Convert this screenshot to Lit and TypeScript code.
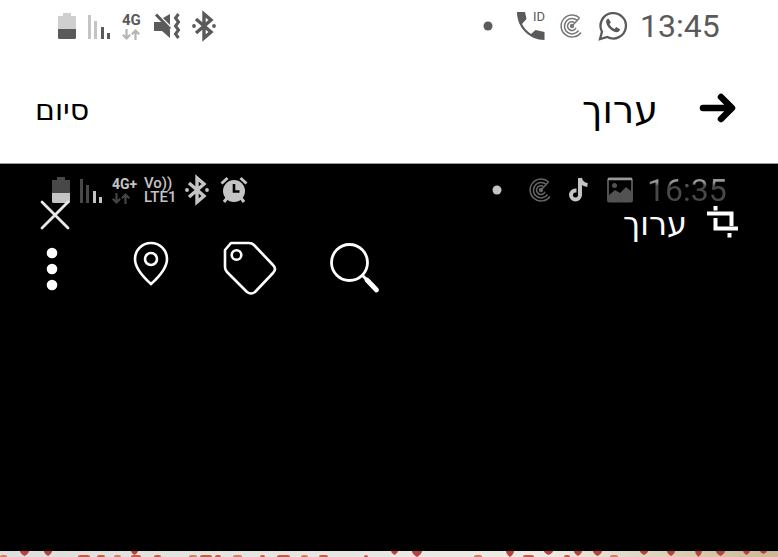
import { LitElement, html, css, svg } from "lit";
import { customElement } from "lit/decorators.js";

const battery = (top: string, body: string) => html`
  <svg width="18" height="26" viewBox="0 0 18 26" aria-hidden="true">
    <path d="M5 0h8v3h5v13H0V3h5z" fill=${top} />
    <path d="M0 16h18v8.500a1.500 1.500 0 0 1-1.500 1.500h-15A1.500 1.500 0 0 1 0 24.500z" fill=${body} />
  </svg>`;

const signal = (weak: string, strong: string) => html`
  <svg width="22" height="26" viewBox="0 0 22 26" aria-hidden="true">
    <path d="M0 2h3v24H0zM6 8h3v18H6z" fill=${weak} />
    <path d="M13 14h3v12h-3zM19 20h3v6h-3z" fill=${strong} />
  </svg>`;

const arrows = html`
  <svg class="arrows" width="18" height="11" viewBox="0 0 18 11" aria-hidden="true">
    <path d="M4.500 0v9M.8 5.800l3.700 3.700 3.700-3.700M13.500 11V2M9.800 5.200l3.700-3.700 3.700 3.700"
      fill="none" stroke="currentColor" stroke-width="2.200" />
  </svg>`;

const bluetooth = html`
  <svg width="24" height="28" viewBox="0 0 24 28" aria-hidden="true">
    <path d="M4 7l15 13-7 6V2l7 6L4 21" fill="none" stroke="currentColor" stroke-width="3.400" />
    <circle cx="2" cy="14" r="1.900" fill="currentColor" />
    <circle cx="22" cy="14" r="1.900" fill="currentColor" />
  </svg>`;

const radar = html`
  <svg class="radar" width="28" height="26" viewBox="0 0 28 26" aria-hidden="true">
    <g fill="none" stroke="currentColor" stroke-width="1.500">
      <path d="M21.500 4.800A11 11 0 1 0 23 19.500" />
      <path d="M19 7.200A7.700 7.700 0 1 0 20.500 17.500" />
      <path d="M16.500 9.500A4.400 4.400 0 1 0 18 14.800" />
      <path d="M14 13l7.500-8" />
    </g>
    <circle cx="14" cy="13" r="2.200" fill="currentColor" />
  </svg>`;

const dot = html`
  <svg width="22" height="10" viewBox="0 0 22 10" aria-hidden="true">
    <circle cx="6" cy="5" r="4.500" fill="currentColor" />
  </svg>`;

const mute = html`
  <svg width="26" height="26" viewBox="0 0 26 26" aria-hidden="true">
    <path d="M0 9h8l8 8v8l-8-7H0zM9 5l7-4v11z" fill="currentColor" />
    <path d="M2 1.500l14 14.500" stroke="currentColor" stroke-width="3" />
    <path d="M24.500 1l-3 4 3 4-3 4 3 4-3 4 3 4" fill="none" stroke="currentColor" stroke-width="3" />
  </svg>`;

const caller = html`
  <svg width="30" height="30" viewBox="0 0 30 30" aria-hidden="true">
    <path d="M1 1h8l1.500 7-4.500 5c2 4 5 7 9 10l4.500-4 9 2v8C14 29 1 17 1 1z" fill="currentColor" />
    <text x="17" y="10" class="id" fill="currentColor">ID</text>
  </svg>`;

const whatsapp = html`
  <svg width="30" height="30" viewBox="0 0 30 30" aria-hidden="true">
    <path d="M2 28l2-7.300A12.700 12.700 0 1 1 9.300 26z" fill="none" stroke="currentColor" stroke-width="2.300" />
    <path fill="currentColor"
      d="M10.500 7.500c-1.800.4-2.700 2-2.300 4 1 4.700 5.500 9 9.800 9.700 2 .2 3.800-.9 4-3l-3.800-2.200-1.700 2c-2.200-.8-4.200-2.800-5-4.900l1.400-1.700z" />
  </svg>`;

const alarm = html`
  <svg width="28" height="28" viewBox="0 0 28 28" aria-hidden="true">
    <circle cx="15" cy="15" r="11" fill="currentColor" />
    <path d="M2.500 7.500l6-5.500M27.500 7.500l-6-5.500M8 22l-3 4M22 22l3 4" stroke="currentColor" stroke-width="3" />
    <path d="M15 8v7.500h5.500" fill="none" stroke="#000" stroke-width="2.600" />
  </svg>`;

const note = html`
  <svg width="24" height="26" viewBox="0 0 24 26" aria-hidden="true">
    <path d="M11 1v17a4.500 4.500 0 1 1-4.500-4.500h1M11 1c.5 4 3.500 6.500 7.500 7" fill="none"
      stroke="currentColor" stroke-width="4" />
  </svg>`;

const picture = html`
  <svg width="26" height="26" viewBox="0 0 26 26" aria-hidden="true">
    <rect x="1" y="1.500" width="24" height="23" rx="1.500" fill="none" stroke="#525252" stroke-width="2" />
    <path d="M1 2h24" stroke="#999" stroke-width="2.500" />
    <path d="M2 18l6-5 5 3 6-6 6 5v9H2z" fill="#525252" />
    <circle cx="7.500" cy="8.500" r="2.500" fill="#525252" />
  </svg>`;

const hearts = [
  [20, 29, 5], [44, 52, 5], [131, 138, 4], [391, 398, 4], [412, 422, 6], [506, 514, 6],
  [544, 553, 4], [574, 582, 5], [593, 602, 5], [640, 648, 4], [667, 675, 5], [695, 702, 6], [716, 725, 5],
  [743, 750, 4], [760, 767, 3],
];
const blots = [
  [0, 7], [78, 90], [97, 105], [114, 121], [131, 141], [154, 161], [189, 197], [200, 212],
  [215, 221], [233, 242], [260, 265], [277, 290], [301, 308], [319, 328], [364, 368],
  [474, 482], [523, 534], [564, 570], [610, 618],
];

@customElement("app-root")
export class AppRoot extends LitElement {
  static styles = css`
    :host {
      display: flex;
      flex-direction: column;
      min-height: 100vh;
      background: #fff;
      font-family: Roboto, "Open Sans", sans-serif;
    }
    svg { display: block; flex: none; overflow: visible; }
    button {
      appearance: none;
      border: 0;
      padding: 0;
      margin: 0;
      background: none;
      color: inherit;
      font: inherit;
      cursor: pointer;
    }
    .status, .group, .bar, .tools, .title { display: flex; align-items: center; }
    .status, .bar { justify-content: space-between; }
    .status { height: 52px; padding: 0 58px 0 58px; color: #5a5a5a; }
    .group { gap: 12px; }
    .clock { font-size: 32px; line-height: 32px; width: 80px; white-space: nowrap; }
    .net { width: 20px; font-size: 15px; line-height: 14px; font-weight: 700; white-space: nowrap; }
    .arrows { margin-top: 2px; color: #b5b5b5; }
    .id { font: 13px Roboto, sans-serif; }
    .radar { color: #777; }
    .editor .radar { color: #666; }
    .bar { font-family: "DejaVu Sans", "Open Sans", sans-serif; }
    .top { height: 112px; padding: 0 42px 0 35px; border-bottom: 1px solid #999; box-sizing: border-box; }
    .title { gap: 42px; }
    h1, h2 { margin: 0; font-weight: 400; }
    h1, h2, .done { padding-top: 4px; }
    h1 { font-size: 38px; line-height: 48px; }
    h2 { font-size: 32px; line-height: 40px; }
    .done { font-size: 30px; line-height: 40px; }
    .editor { flex: 1; background: #000; color: #fff; }
    .editor .status { padding: 0 51px 0 52px; color: #c4c4c4; }
    .editor .group { gap: 10px; }
    .editor .group.end { gap: 14px; }
    .editor .net { width: 22px; font-size: 14px; }
    .editor .arrows { color: #444; }
    .editor .clock {
      background: linear-gradient(#999 8px, #484848 12px);
      background-clip: text;
      -webkit-background-clip: text;
      color: transparent;
    }
    .volte { width: 31px; font-size: 15px; line-height: 14px; font-weight: 500; white-space: nowrap; }
    .inner { height: 40px; margin-top: -16px; padding: 0 40px; align-items: flex-start; }
    .inner .title { gap: 20px; }
    .tools { padding: 0 46px; height: 56px; }
    .tools button { margin-right: 54px; }
    .tools .more { margin-right: 75px; }
    .strip { width: 100%; height: 6px; }
  `;

  render() {
    return html`
      <div class="status">
        <div class="group">
          ${battery("#cfcfcf", "#5a5a5a")} ${signal("#c4c4c4", "#5a5a5a")}
          <div class="net">4G${arrows}</div>
          ${mute} ${bluetooth}
        </div>
        <div class="group">
          ${dot} ${caller} ${radar} ${whatsapp}
          <time class="clock">13:45</time>
        </div>
      </div>
      <header class="bar top">
        <button class="done" lang="he">סיום</button>
        <div class="title">
          <h1 lang="he">ערוך</h1>
          <button aria-label="חזרה">
            <svg width="36" height="30" viewBox="0 0 36 30">
              <path d="M3 15h28M21 4l11 11-11 11" fill="none" stroke="#000" stroke-width="6.500"
                stroke-linecap="round" stroke-linejoin="round" />
            </svg>
          </button>
        </div>
      </header>
      <main class="editor">
        <div class="status">
          <div class="group">
            ${battery("#484848", "#c4c4c4")} ${signal("#484848", "#c4c4c4")}
            <div class="net">4G+${arrows}</div>
            <div class="volte"><div>Vo))</div><div>LTE1</div></div>
            ${bluetooth} ${alarm}
          </div>
          <div class="group end">
            ${dot} ${radar} ${note} ${picture}
            <time class="clock">16:35</time>
          </div>
        </div>
        <div class="bar inner">
          <button aria-label="סגירה">
            <svg width="30" height="30" viewBox="0 0 30 30">
              <path d="M2 2l26 26M28 2L2 28" stroke="#e8e8e8" stroke-width="2.800" stroke-linecap="round" />
            </svg>
          </button>
          <div class="title">
            <h2 lang="he">ערוך</h2>
            <button aria-label="חיתוך">
              <svg width="31" height="32" viewBox="0 0 31 32">
                <path d="M0 7.500h24.500V20M22.500 27v4.500M8.500 0v4.500M8.500 12v10.500H31" fill="none" stroke="#fff"
                  stroke-width="4" />
              </svg>
            </button>
          </div>
        </div>
        <div class="tools">
          <button class="more" aria-label="עוד">
            <svg width="12" height="46" viewBox="0 0 12 46" fill="#fff">
              <circle cx="6" cy="8" r="5.300" />
              <circle cx="6" cy="24" r="5.300" />
              <circle cx="6" cy="40" r="5.300" />
            </svg>
          </button>
          <button aria-label="מיקום">
            <svg width="36" height="52" viewBox="0 0 36 52" fill="none" stroke="#fff" stroke-width="2.600">
              <path d="M18 42C9 34 2 25 2 17a16 16 0 0 1 32 0c0 8-7 17-16 25z" />
              <circle cx="18" cy="17" r="6" />
            </svg>
          </button>
          <button aria-label="תגית">
            <svg width="54" height="54" viewBox="0 0 54 54" fill="none" stroke="#fff" stroke-width="2.600">
              <path d="M8 2h18q3 0 5 2l19 20q4 4 0 8L32 51q-4 3-8 0L4 31q-2-2-2-5V9z" stroke-linejoin="round" />
              <circle cx="13.500" cy="14" r="4.800" />
            </svg>
          </button>
          <button aria-label="חיפוש">
            <svg width="50" height="50" viewBox="0 0 50 50" fill="none" stroke="#fff">
              <circle cx="18.500" cy="19.500" r="18" stroke-width="2.800" />
              <path d="M31 32l5 5" stroke-width="3" />
              <path d="M36 37l9.500 10" stroke-width="4.800" stroke-linecap="round" />
            </svg>
          </button>
        </div>
      </main>
      <svg class="strip" viewBox="0 0 778 6" preserveAspectRatio="none" aria-hidden="true">
        <defs>
          <linearGradient id="paper">
            <stop offset="0" stop-color="#dedfdd" />
            <stop offset=".7" stop-color="#eeebe6" />
            <stop offset="1" stop-color="#cdb894" />
          </linearGradient>
        </defs>
        <rect width="778" height="6" fill="url(#paper)" />
        ${hearts.map(([a, b, d]) => svg`<path d="M${a} 0H${b}Q${b} ${d / 2} ${(a + b) / 2} ${d}Q${a} ${d / 2} ${a} 0z" fill="#b8433a" />`)}
        ${blots.map(([a, b], i) => svg`<path d="M${a} 6q0-2 2-2H${b - 2}q2 0 2 2z" fill=${i % 3 ? "#c95b45" : "#d67f62"} />`)}
      </svg>
    `;
  }
}
